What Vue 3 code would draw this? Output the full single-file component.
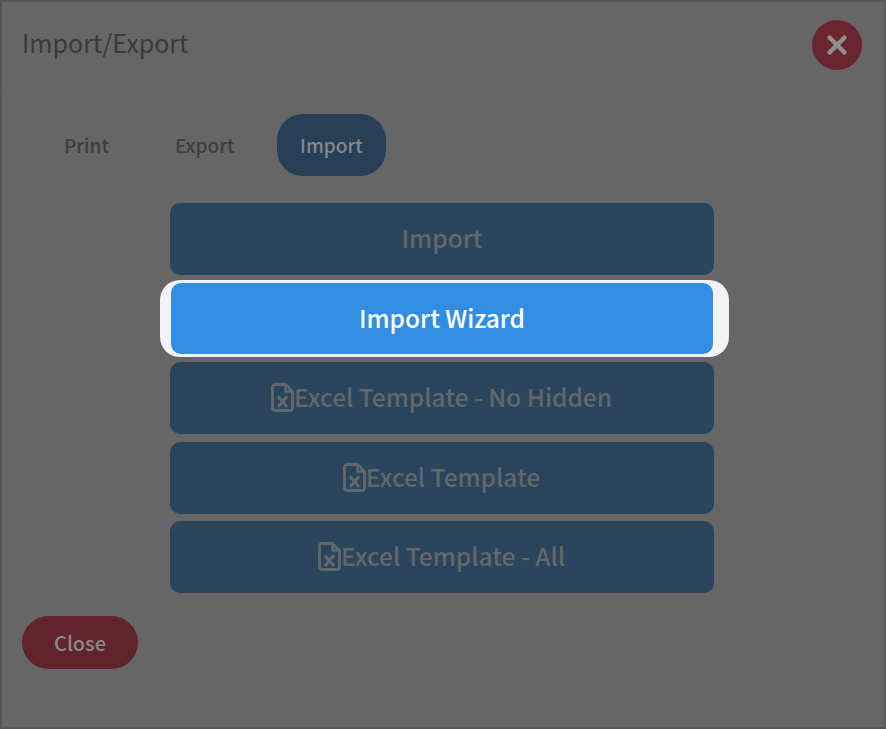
<template>
  <div class="modal">
    <div class="header">
      <div class="title">Import/Export</div>
      <button class="closeX">
        <svg width="24" height="24" viewBox="0 0 24 24">
          <path d="M4.5 4.5L19.5 19.5M19.5 4.5L4.5 19.5" stroke="#8f8f8f" stroke-width="4.4" stroke-linecap="round" />
        </svg>
      </button>
    </div>
    <div class="body">
      <div class="tabs">
        <div v-for="tab in tabs" :key="tab" class="tab" :class="{ active: tab == 'Import' }">{{ tab }}</div>
      </div>
      <div class="list">
        <button v-for="item in items" :key="item.label" class="action" :class="{ focus: item.focus }">
          <span v-if="item.focus" class="spot"></span>
          <svg v-if="item.icon" class="fileIcon" width="23" height="29" viewBox="0 0 23 29" fill="none">
            <path d="M4 1.5H14.5L21.5 8.5V25a2.5 2.5 0 0 1-2.5 2.5H4A2.5 2.5 0 0 1 1.5 25V4A2.5 2.5 0 0 1 4 1.5Z" stroke="#62676c" stroke-width="2.8" />
            <path d="M14.5 1.5V8.5H21.5" stroke="#62676c" stroke-width="2.4" />
            <path d="M7 13.5L16 24M16 13.5L7 24" stroke="#62676c" stroke-width="3.2" />
          </svg>
          <span class="label">{{ item.label }}</span>
        </button>
      </div>
    </div>
    <div class="footer">
      <button class="close">Close</button>
    </div>
  </div>
</template>

<script setup>
const tabs = ['Print', 'Export', 'Import']

const items = [
  { label: 'Import' },
  { label: 'Import Wizard', focus: true },
  { label: 'Excel Template - No Hidden', icon: true },
  { label: 'Excel Template', icon: true },
  { label: 'Excel Template - All', icon: true }
]
</script>

<style>
html, body {
  margin: 0;
  background: #666666;
}
</style>

<style scoped>
.modal {
  box-sizing: border-box;
  width: 886px;
  height: 729px;
  border: 2px solid #555555;
  border-right-color: #5c5c5c;
  background: #666666;
  font-family: "Noto Sans CJK KR", "Noto Sans", sans-serif;
  overflow: hidden;
}

.header {
  box-sizing: border-box;
  height: 94px;
  padding: 0 22px 8px 20px;
  display: flex;
  align-items: center;
  justify-content: space-between;
  border-bottom: 1px solid #636363;
}

.title {
  font-size: 25px;
  color: #3b3b3b;
  margin-bottom: 5px;
}

.closeX {
  width: 50px;
  height: 50px;
  border: none;
  border-radius: 50%;
  background: #6b252d;
  padding: 0;
  display: flex;
  align-items: center;
  justify-content: center;
}

.body {
  padding: 18px 0 0 0;
}

.tabs {
  display: flex;
  padding-left: 38.5px;
  gap: 19px;
}

.tab {
  box-sizing: border-box;
  height: 62px;
  display: flex;
  align-items: center;
  padding: 0 23.5px 1px;
  border-radius: 26px;
  font-size: 19px;
  font-weight: 500;
  color: #3f3f3f;
}

.active {
  padding: 0 23px 1px;
  background: #293f55;
  color: #83888d;
}

.list {
  margin-top: 27px;
  margin-left: 168px;
  width: 544px;
  display: flex;
  flex-direction: column;
  gap: 7.6px;
}

.action {
  position: relative;
  height: 72px;
  border: none;
  border-radius: 10px;
  background: #2b455d;
  color: #62676c;
  font-family: inherit;
  font-size: 24.5px;
  font-weight: 500;
  display: flex;
  align-items: center;
  justify-content: center;
  padding: 0 0 3px;
}

.fileIcon {
  flex: none;
  margin-top: 2px;
  margin-left: -1px;
}

.focus {
  background: transparent;
  color: #ffffff;
}

.focus .label {
  position: relative;
}

.spot {
  position: absolute;
  left: -10px;
  top: -3px;
  width: 569px;
  height: 77px;
  border-radius: 20px;
  background: #f2f2f7;
}

.spot::after {
  content: "";
  position: absolute;
  left: 11px;
  top: 3px;
  right: 16px;
  bottom: 3px;
  border-radius: 10px;
  background: #328ee3;
}

.footer {
  padding: 23px 0 0 20px;
}

.close {
  width: 116px;
  height: 53px;
  border: none;
  border-radius: 27px;
  background: #62242b;
  color: #8b8989;
  font-family: inherit;
  font-size: 20px;
  font-weight: 500;
  padding: 0;
}
</style>
